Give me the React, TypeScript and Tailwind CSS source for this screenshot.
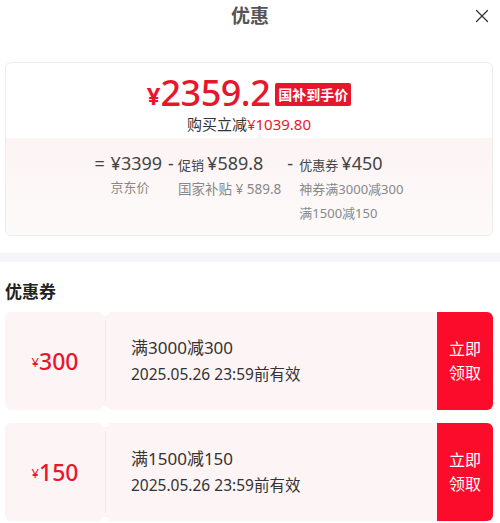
import React from 'react';
import { X } from 'lucide-react';

const coupons = [
  { id: 1, amount: '300', rule: '满3000减300', expire: '2025.05.26 23:59前有效' },
  { id: 2, amount: '150', rule: '满1500减150', expire: '2025.05.26 23:59前有效' },
];

const font = { fontFamily: '"Noto Sans", "Noto Sans CJK SC", sans-serif' };

const App = () => {
  return (
    <div className="w-[500px] h-[523px] bg-white overflow-hidden" style={font}>
      {/* Header */}
      <div className="relative h-[32px] flex items-center justify-center">
        <h1 className="text-[19px] font-bold text-[#555]">优惠</h1>
        <button className="absolute right-[7px] top-[5px] text-[#333]">
          <X className="w-[22px] h-[22px]" strokeWidth={1.4} />
        </button>
      </div>

      {/* Price breakdown card */}
      <div className="ml-[5px] mr-[7px] mt-[30px] rounded-[6px] border border-[#ececec] overflow-hidden">
        <div className="relative pt-[12px] pb-[3px] flex flex-col items-center">
          <div className="flex items-center h-[36px]">
            <span className="text-[#e8162d] text-[24px] font-bold leading-none mt-[6px]">¥</span>
            <span className="text-[#e8162d] text-[36px] font-medium leading-[36px] tracking-[-0.5px]">2359.2</span>
            <span className="ml-[5px] mt-[3px] bg-[#e8162d] text-white text-[14px] font-bold px-[3px] h-[23px] leading-[23px] rounded-[2px]">
              国补到手价
            </span>
          </div>
          <div className="mt-[2px] text-[15px] leading-[22px] text-[#333]">
            购买立减<span className="text-[#e8162d]">¥1039.80</span>
          </div>
          <div className="absolute bottom-[-1px] left-[249px] w-0 h-0 border-l-[5px] border-r-[5px] border-b-[5px] border-l-transparent border-r-transparent border-b-[#fdf4f4]" />
        </div>
        <div className="bg-gradient-to-b from-[#fdf4f4] to-[#fdfafa] pt-[13px] pb-[10px] flex justify-center gap-[6px] text-[#444]">
          <div className="flex">
            <span className="text-[18px] leading-[24px] w-[16px]">=</span>
            <div className="flex flex-col">
              <span className="text-[18px] leading-[24px]">¥3399</span>
              <span className="text-[13px] leading-[24px] text-[#888]">京东价</span>
            </div>
          </div>
          <div className="flex">
            <span className="text-[18px] leading-[24px] w-[10px]">-</span>
            <div className="flex flex-col">
              <span className="leading-[24px]">
                <span className="text-[13px]">促销</span>
                <span className="text-[18px] ml-[3px]">¥589.8</span>
              </span>
              <span className="text-[13.5px] leading-[24px] text-[#888]">国家补贴 ¥ 589.8</span>
            </div>
          </div>
          <div className="flex">
            <span className="text-[18px] leading-[24px] w-[12px]">-</span>
            <div className="flex flex-col">
              <span className="leading-[24px]">
                <span className="text-[13px]">优惠券</span>
                <span className="text-[18px] ml-[3px]">¥450</span>
              </span>
              <span className="text-[13px] leading-[24px] text-[#888]">神券满3000减300</span>
              <span className="text-[13px] leading-[24px] text-[#888]">满1500减150</span>
            </div>
          </div>
        </div>
      </div>

      {/* Divider band */}
      <div className="mt-[17px] h-[9px] bg-[#f6f6fa]" />

      {/* Coupons */}
      <h2 className="px-[5px] mt-[18px] text-[17px] font-bold text-[#222] leading-[24px]">优惠券</h2>
      <div className="mt-[8px] pl-[5px] pr-[7px] flex flex-col gap-[13px]">
        {coupons.map((c) => (
          <div key={c.id} className="relative h-[98px] flex rounded-[6px] overflow-hidden bg-[#fdf4f5]">
            <div className="w-[100px] flex items-center justify-center text-[#e8162d]">
              <span className="text-[13px] mt-[4px]">¥</span>
              <span className="text-[23px] font-medium">{c.amount}</span>
            </div>
            <div className="w-px my-[8px] bg-[#f5e6e8]" />
            <div className="absolute left-[96px] top-[-4px] w-[8px] h-[8px] rounded-full bg-white" />
            <div className="absolute left-[96px] bottom-[-4px] w-[8px] h-[8px] rounded-full bg-white" />
            <div className="flex-1 flex flex-col justify-center pl-[25px] text-[#333]">
              <span className="text-[17px] leading-[24px]">{c.rule}</span>
              <span className="text-[15.5px] leading-[24px] mt-[2px]">{c.expire}</span>
            </div>
            <button className="w-[56px] bg-[#fa0c2a] text-white text-[16px] leading-[24px] flex flex-col items-center justify-center">
              <span>立即</span>
              <span>领取</span>
            </button>
          </div>
        ))}
      </div>
    </div>
  );
};

export default App;
